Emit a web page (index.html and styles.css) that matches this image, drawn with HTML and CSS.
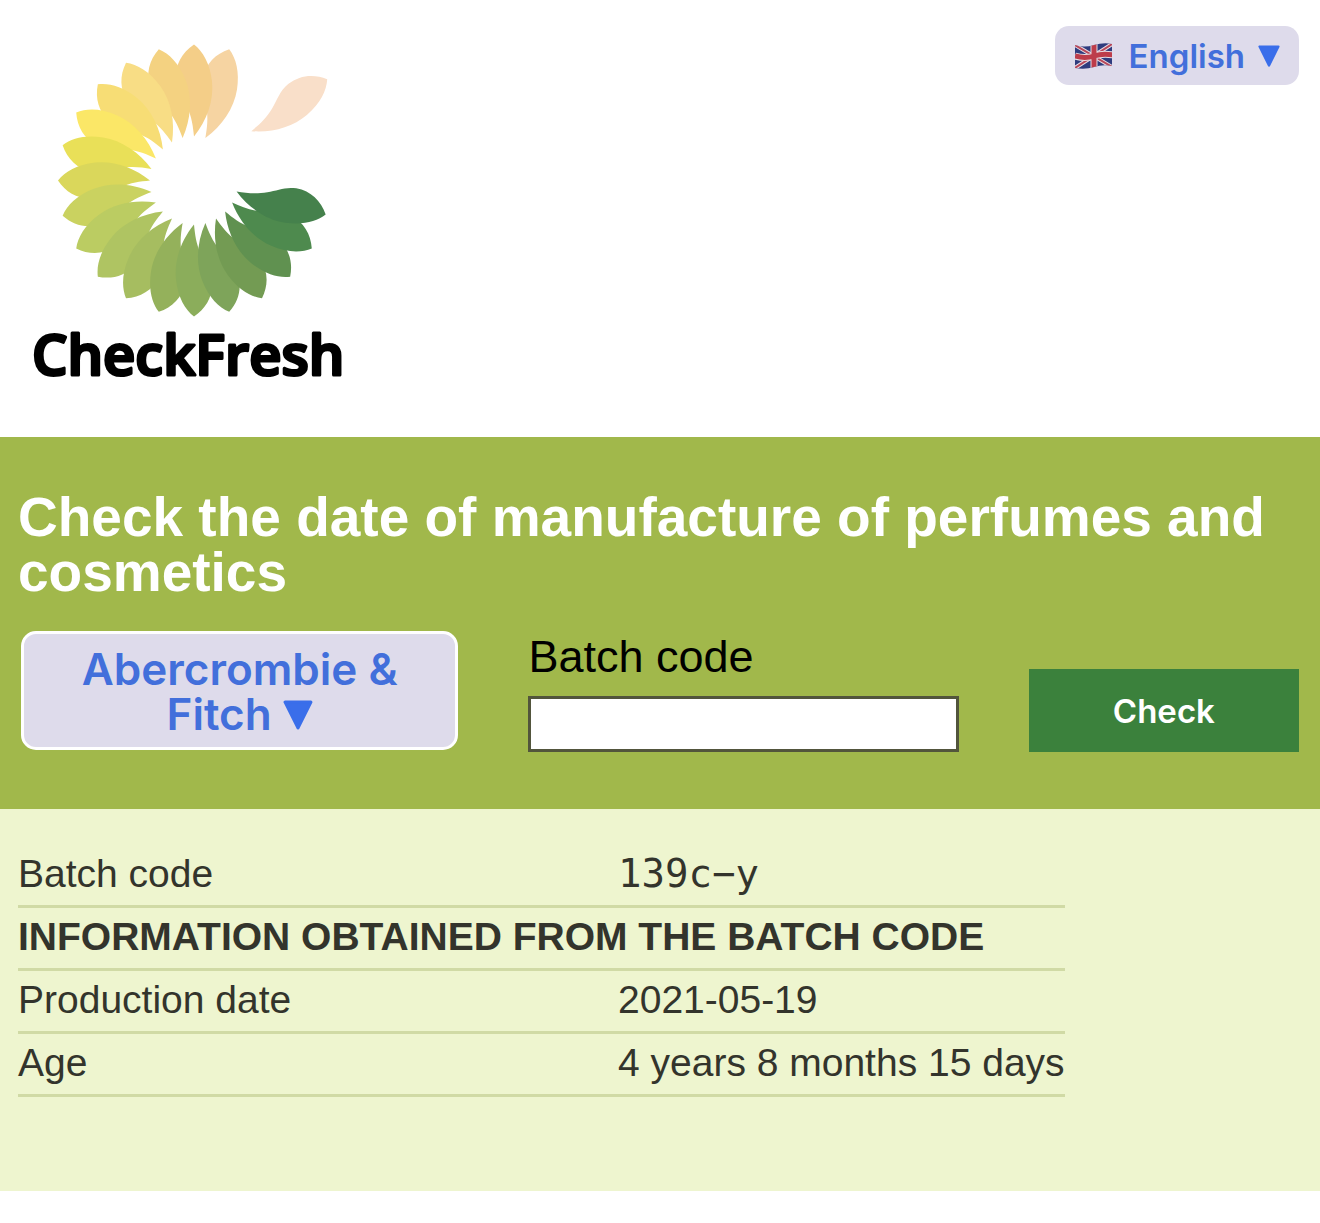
FILE: index.html
```html
<!DOCTYPE html>
<html lang="en">
<head>
  <meta charset="UTF-8">
  <meta name="viewport" content="width=device-width, initial-scale=1.0">
  <title>CheckFresh</title>
  <link rel="stylesheet" href="styles.css">
</head>
<body>

<header>
  <a class="logo" href="#" aria-label="CheckFresh">
    <svg width="330" height="360" viewBox="24 34 330 360">
      <defs>
        <path id="petal" d="M0-44C-1-54-2-63-7-74C-11-83-17-90-18-101C-19-116-12-128 0-136C9-129 16-117 18-99C20-80 13-60 0-44Z"/>
      </defs>
      <use href="#petal" fill="#f9dfc9" transform="translate(215 156) rotate(55.6)"/>
      <g transform="translate(194 180.5)">
        <use href="#petal" fill="#f6d4a2" transform="rotate(15)"/>
        <use href="#petal" fill="#f4ce88" transform="rotate(0)"/>
        <use href="#petal" fill="#f4d281" transform="rotate(-15)"/>
        <use href="#petal" fill="#f8dd85" transform="rotate(-30)"/>
        <use href="#petal" fill="#f7dd75" transform="rotate(-45)"/>
        <use href="#petal" fill="#fbe767" transform="rotate(-60)"/>
        <use href="#petal" fill="#e9e058" transform="rotate(-75)"/>
        <use href="#petal" fill="#dad75b" transform="rotate(-90)"/>
        <use href="#petal" fill="#cad260" transform="rotate(-105)"/>
        <use href="#petal" fill="#bbcc62" transform="rotate(-120)"/>
        <use href="#petal" fill="#afc462" transform="rotate(-135)"/>
        <use href="#petal" fill="#a6bd60" transform="rotate(-150)"/>
        <use href="#petal" fill="#94b15b" transform="rotate(-165)"/>
        <use href="#petal" fill="#8bad5b" transform="rotate(180)"/>
        <use href="#petal" fill="#7ea45a" transform="rotate(165)"/>
        <use href="#petal" fill="#739b53" transform="rotate(150)"/>
        <use href="#petal" fill="#609150" transform="rotate(135)"/>
        <use href="#petal" fill="#4e8a4e" transform="rotate(120)"/>
        <use href="#petal" fill="#45814c" transform="rotate(104.5)"/>
      </g>
      <text class="logo-text" x="32" y="375">CheckFresh</text>
    </svg>
  </a>
  <button class="lang-btn" type="button" aria-haspopup="listbox">
    <svg class="flag" width="38" height="28" viewBox="0 0 38 28" aria-hidden="true">
      <clipPath id="wave"><path d="M0 3Q9 6 19 3T37 2V24Q28 22 19 25T0 26Z"/></clipPath>
      <g clip-path="url(#wave)">
        <path fill="#2f3c7e" d="M0 0h38v28H0z"/>
        <path stroke="#e6dce3" stroke-width="4" d="M0 3l37 22M37 2L0 26"/>
        <path stroke="#b8485a" stroke-width="2" d="M0 3l37 22M37 2L0 26"/>
        <path fill="none" stroke="#e6dce3" stroke-width="7" d="M19 0v28M0 14Q10 17 19 14T38 13"/>
        <path fill="none" stroke="#bd3c4a" stroke-width="5" d="M19 0v28M0 14Q10 17 19 14T38 13"/>
      </g>
    </svg>
    <span>English</span>
    <svg class="arrow" viewBox="0 0 28 28" aria-hidden="true"><path d="M2 2h24L14 26z"/></svg>
  </button>
</header>

<main>
  <section class="search">
    <h1>Check the date of manufacture of perfumes and cosmetics</h1>
    <form class="search-form">
      <button class="brand-btn" type="button" aria-haspopup="listbox">Abercrombie &amp; Fitch <svg class="arrow" viewBox="0 0 28 28" aria-hidden="true"><path d="M2 2h24L14 26z"/></svg></button>
      <div class="field">
        <label for="batch">Batch code</label>
        <input type="text" id="batch" name="batch">
      </div>
      <button class="check-btn" type="submit">Check</button>
    </form>
  </section>

  <section class="results">
    <table>
      <tr>
        <td class="name">Batch code</td>
        <td class="code">139c−y</td>
      </tr>
      <tr>
        <th colspan="2">INFORMATION OBTAINED FROM THE BATCH CODE</th>
      </tr>
      <tr>
        <td class="name">Production date</td>
        <td>2021-05-19</td>
      </tr>
      <tr>
        <td class="name">Age</td>
        <td>4 years 8 months 15 days</td>
      </tr>
    </table>
  </section>
</main>

</body>
</html>
```
FILE: styles.css
```css
:root {
  --green: #a1b84b;
  --dark-green: #3b813c;
  --light-green: #eef5cf;
  --line: #d0daa5;
  --button-bg: #dedbeb;
  --blue: #426fdb;
  --text: #33342c;
}

* {
  box-sizing: border-box;
}

body {
  margin: 0;
  background: #fff;
  color: var(--text);
  font-family: Arial, "Liberation Sans", sans-serif;
}

button {
  font-family: Inter, sans-serif;
  font-weight: 600;
  cursor: pointer;
}

header {
  display: flex;
  align-items: flex-start;
  justify-content: space-between;
  padding: 26px 21px 43px 24px;
}

.logo {
  display: block;
  padding-top: 8px;
}

.logo svg {
  display: block;
}

.logo-text {
  font-family: "Open Sans", sans-serif;
  font-size: 56px;
  font-weight: 600;
  fill: #000;
  stroke: #000;
  stroke-width: 3px;
  stroke-linejoin: round;
}

.lang-btn {
  display: flex;
  align-items: center;
  height: 59px;
  padding: 0 19px 0 20px;
  border: none;
  border-radius: 14px;
  background-color: var(--button-bg);
  color: var(--blue);
  font-size: 33px;
}

.lang-btn span {
  margin: 0 13px 0 16px;
}

.arrow {
  width: 30px;
  height: 30px;
  fill: #3a6eea;
  stroke: #3a6eea;
  stroke-width: 3px;
  stroke-linejoin: round;
}

.lang-btn .arrow {
  width: 22px;
  height: 22px;
}

.search {
  padding: 53px 18px 57px;
  background-color: var(--green);
}

h1 {
  margin: 0 0 31px;
  color: #fff;
  font-size: 55px;
  line-height: 55px;
}

.search-form {
  display: grid;
  grid-template-columns: 437fr 430fr 270fr;
  align-items: end;
  gap: 70px;
  padding: 0 3px;
}

.brand-btn {
  align-self: start;
  padding: 13px 40px 10px;
  border: 3px solid #fff;
  border-radius: 15px;
  background-color: var(--button-bg);
  color: var(--blue);
  font-size: 44px;
  line-height: 45px;
}

.field label {
  display: block;
  margin-bottom: 14px;
  color: #000;
  font-size: 45px;
  line-height: 51px;
}

.field input {
  display: block;
  width: 100%;
  height: 56px;
  padding: 0 10px;
  border: 3px solid #52553c;
  border-radius: 0;
  background-color: #fff;
  font-size: 38px;
}

.check-btn {
  height: 83px;
  border: none;
  background-color: var(--dark-green);
  color: #fff;
  font-size: 33px;
}

.results {
  padding: 36px 18px 94px;
  background-color: var(--light-green);
}

table {
  border-spacing: 0;
  font-size: 39px;
  line-height: 44px;
}

td,
th {
  height: 63px;
  padding: 7px 0 9px;
  border-bottom: 3px solid var(--line);
  text-align: left;
}

.name {
  width: 600px;
}

.code {
  font-family: "DejaVu Sans Mono", monospace;
}
```
